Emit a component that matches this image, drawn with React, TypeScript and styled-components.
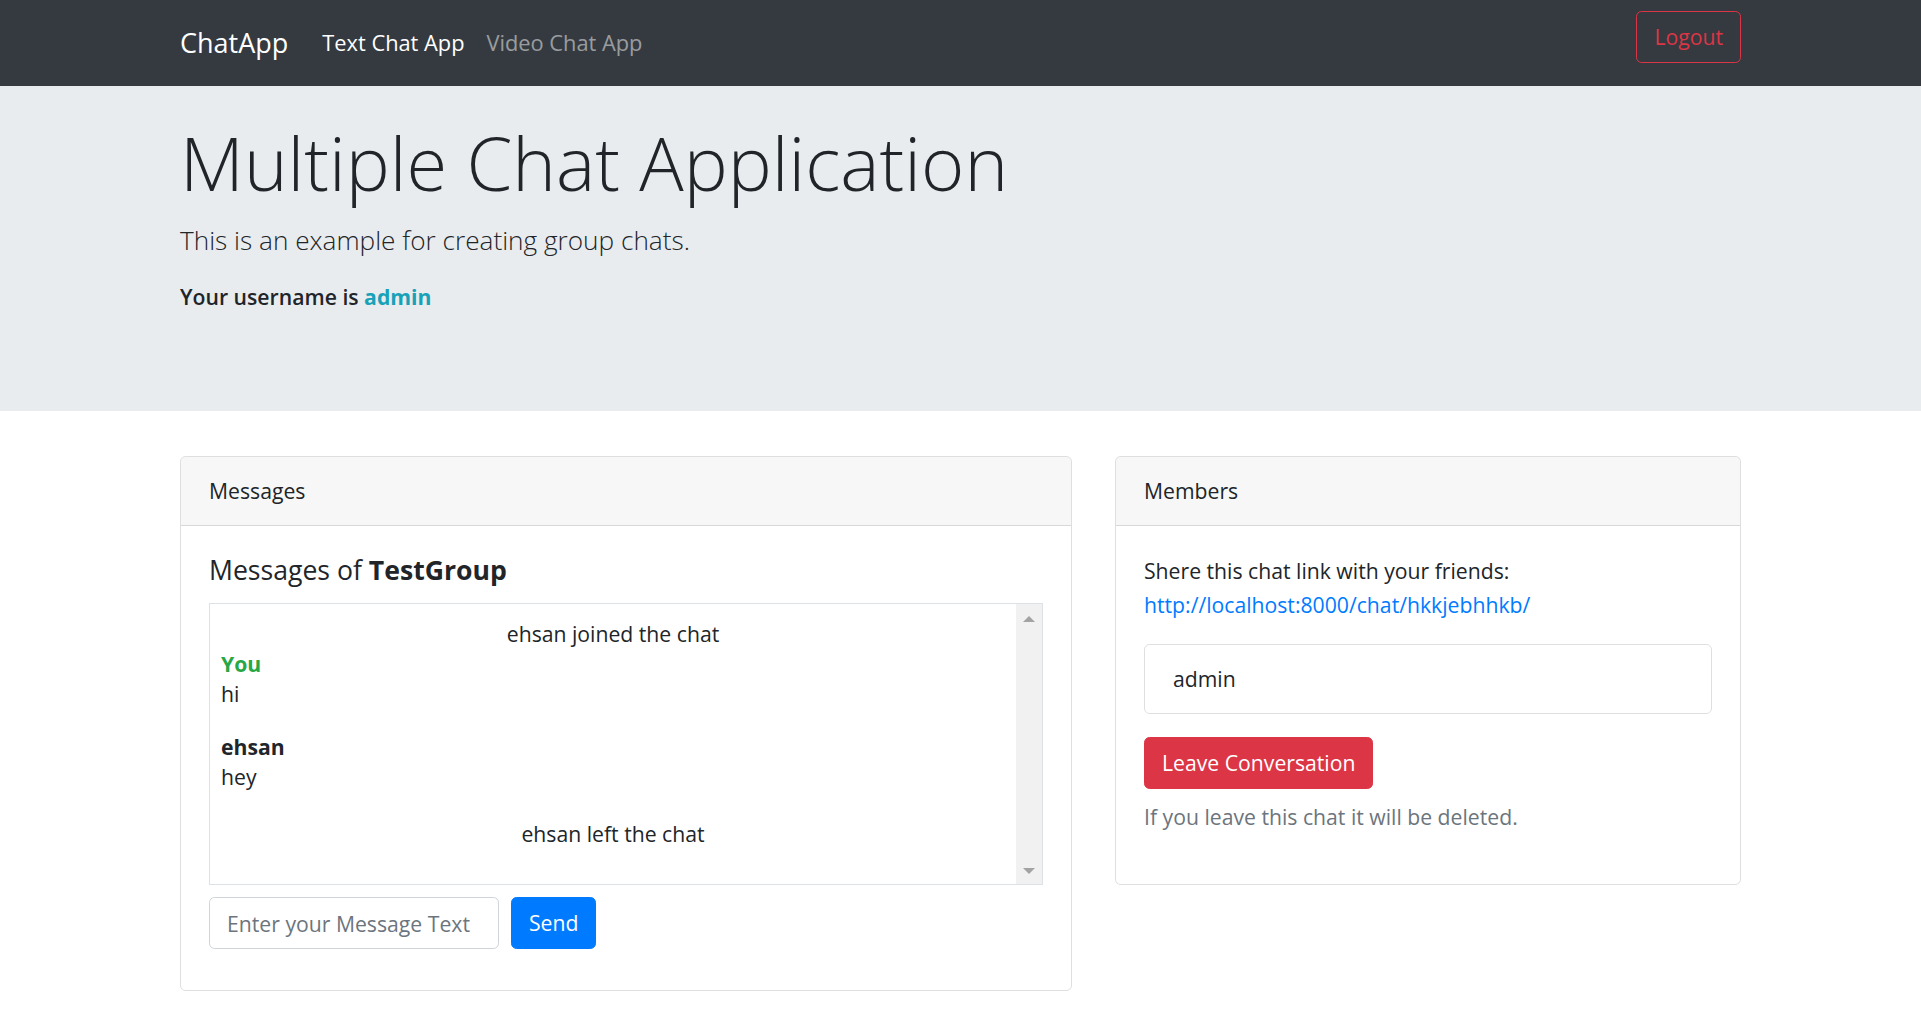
import React from "react";
import styled, { createGlobalStyle } from "styled-components";

const GlobalStyle = createGlobalStyle`
  * {
    box-sizing: border-box;
  }

  body {
    margin: 0;
    background: #fff;
    color: #212529;
    font-family: "Open Sans", "Liberation Sans", sans-serif;
    font-size: 21.2px;
    line-height: 33.75px;
  }
`;

const Container = styled.div`
  width: 1561px;
  margin: 0 auto;
`;

const Navbar = styled.nav`
  height: 86px;
  background: #343a40;
`;

const NavInner = styled(Container)`
  display: flex;
  align-items: center;
  height: 100%;
`;

const Brand = styled.a`
  color: #fff;
  font-size: 27px;
  line-height: 42px;
  margin-right: 23px;
  text-decoration: none;
`;

const NavLink = styled.a<{ $active?: boolean }>`
  padding: 0 11px;
  font-size: 21.8px;
  color: ${({ $active }) => ($active ? "#fff" : "rgba(255, 255, 255, 0.5)")};
  text-decoration: none;
`;

const OutlineDangerButton = styled.button`
  margin-left: auto;
  align-self: flex-start;
  margin-top: 11px;
  height: 52px;
  padding: 0 17px;
  border: 1px solid #dc3545;
  border-radius: 5.6px;
  background: transparent;
  color: #dc3545;
  font: inherit;
`;

const Jumbotron = styled.header`
  height: 325px;
  padding-top: 29px;
  background: #e9ecef;
`;

const Display = styled.h1`
  margin: 0 0 8px;
  font-size: 74px;
  line-height: 96px;
  font-weight: 300;
`;

const Lead = styled.p`
  margin: 0 0 19px;
  font-size: 26.2px;
  line-height: 42px;
  font-weight: 300;
`;

const Username = styled.p`
  margin: 0;
  font-weight: 600;
`;

const InfoName = styled.span`
  color: #17a2b8;
  font-weight: 700;
`;

const Columns = styled(Container)`
  display: grid;
  grid-template-columns: 892px 626px;
  column-gap: 43px;
  align-items: start;
  margin-top: 45px;
`;

const Card = styled.section`
  border: 1px solid rgba(0, 0, 0, 0.125);
  border-radius: 5.6px;
  overflow: hidden;
`;

const CardHeader = styled.div`
  padding: 17px 28px;
  background: rgba(0, 0, 0, 0.03);
  border-bottom: 1px solid rgba(0, 0, 0, 0.125);
`;

const CardBody = styled.div`
  padding: 28px;
`;

const CardTitle = styled.h5`
  margin: 0 0 16px;
  font-size: 26.6px;
  line-height: 33.6px;
  font-weight: 500;
`;

const MessageBox = styled.div`
  display: flex;
  height: 282px;
  border: 1px solid #dee2e6;
`;

const MessageList = styled.div`
  flex: 1;
  padding: 15px 11px 13px;
  line-height: 30px;
`;

const SystemLine = styled.p`
  margin: 0;
  text-align: center;
`;

const MessageBlock = styled.div<{ $gap: number }>`
  margin-bottom: ${({ $gap }) => $gap}px;
`;

const Author = styled.div<{ $self?: boolean }>`
  font-weight: 700;
  color: ${({ $self }) => ($self ? "#28a745" : "#212529")};
`;

const ScrollTrack = styled.div`
  display: flex;
  flex-direction: column;
  justify-content: space-between;
  align-items: center;
  width: 26px;
  padding: 12px 0 10px;
  background: #f1f1f1;
`;

const Arrow = styled.span<{ $down?: boolean }>`
  width: 0;
  height: 0;
  border-left: 6px solid transparent;
  border-right: 6px solid transparent;
  ${({ $down }) =>
    $down ? "border-top: 6px solid #a3a3a3;" : "border-bottom: 6px solid #a3a3a3;"}
`;

const SendRow = styled.form`
  display: flex;
  gap: 12px;
  margin: 12px 0 13px;
`;

const TextInput = styled.input`
  width: 290px;
  height: 52px;
  padding: 0 17px;
  border: 1px solid #ced4da;
  border-radius: 5.6px;
  font: inherit;
  color: #495057;

  &::placeholder {
    color: #6c757d;
  }
`;

const SolidButton = styled.button<{ $color: string }>`
  height: 52px;
  padding: 0 17px;
  border: 1px solid ${({ $color }) => $color};
  border-radius: 5.6px;
  background: ${({ $color }) => $color};
  color: #fff;
  font: inherit;
`;

const Paragraph = styled.p<{ $muted?: boolean }>`
  margin: 0 0 22.5px;
  color: ${({ $muted }) => ($muted ? "#6c757d" : "inherit")};
`;

const Link = styled.a`
  color: #007bff;
  text-decoration: none;
`;

const MemberItem = styled.div`
  padding: 17px 28px;
  border: 1px solid rgba(0, 0, 0, 0.125);
  border-radius: 5.6px;
  margin-bottom: 23px;
`;

const LeaveNote = styled(Paragraph)`
  margin-top: 11px;
`;

const App = () => {
  return (
    <>
      <GlobalStyle />
      <Navbar>
        <NavInner>
          <Brand href="#">ChatApp</Brand>
          <NavLink href="#" $active>
            Text Chat App
          </NavLink>
          <NavLink href="#">Video Chat App</NavLink>
          <OutlineDangerButton>Logout</OutlineDangerButton>
        </NavInner>
      </Navbar>

      <Jumbotron>
        <Container>
          <Display>Multiple Chat Application</Display>
          <Lead>This is an example for creating group chats.</Lead>
          <Username>
            Your username is <InfoName>admin</InfoName>
          </Username>
        </Container>
      </Jumbotron>

      <Columns>
        <Card>
          <CardHeader>Messages</CardHeader>
          <CardBody>
            <CardTitle>
              Messages of <b>TestGroup</b>
            </CardTitle>
            <MessageBox>
              <MessageList>
                <SystemLine>ehsan joined the chat</SystemLine>
                <MessageBlock $gap={23}>
                  <Author $self>You</Author>
                  <div>hi</div>
                </MessageBlock>
                <MessageBlock $gap={27}>
                  <Author>ehsan</Author>
                  <div>hey</div>
                </MessageBlock>
                <SystemLine>ehsan left the chat</SystemLine>
              </MessageList>
              <ScrollTrack>
                <Arrow />
                <Arrow $down />
              </ScrollTrack>
            </MessageBox>
            <SendRow onSubmit={(e) => e.preventDefault()}>
              <TextInput placeholder="Enter your Message Text" />
              <SolidButton $color="#007bff">Send</SolidButton>
            </SendRow>
          </CardBody>
        </Card>

        <Card>
          <CardHeader>Members</CardHeader>
          <CardBody>
            <Paragraph>
              Shere this chat link with your friends:
              <br />
              <Link href="#">http://localhost:8000/chat/hkkjebhhkb/</Link>
            </Paragraph>
            <MemberItem>admin</MemberItem>
            <SolidButton $color="#dc3545">Leave Conversation</SolidButton>
            <LeaveNote $muted>If you leave this chat it will be deleted.</LeaveNote>
          </CardBody>
        </Card>
      </Columns>
    </>
  );
};

export default App;
